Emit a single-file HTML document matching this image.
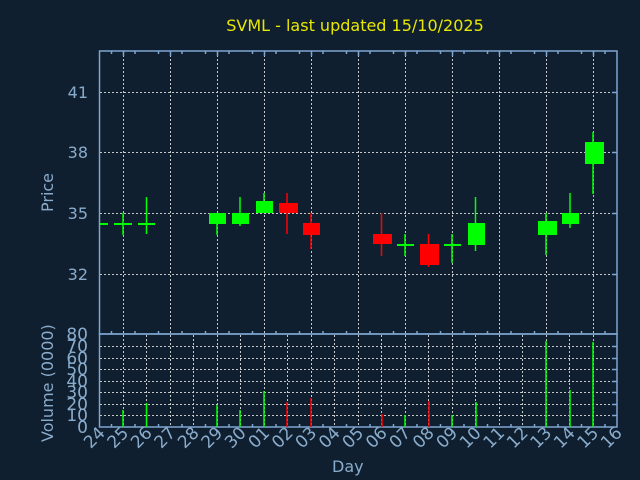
<!DOCTYPE html>
<html><head><meta charset="utf-8"><style>
html,body{margin:0;padding:0;background:#0f1f2f;width:640px;height:480px;overflow:hidden}
svg{display:block}
text{font-family:"DejaVu Sans","Liberation Sans",sans-serif}
</style></head><body>
<svg width="640" height="480" viewBox="0 0 640 480" xmlns="http://www.w3.org/2000/svg">
<rect width="640" height="480" fill="#0f1f2f"/>
<text x="355" y="31" fill="#e8e800" font-size="16" text-anchor="middle">SVML - last updated 15/10/2025</text>
<g stroke="#c8c8c8" stroke-width="1" stroke-dasharray="2,2" fill="none">
<path d="M100 92.5H617M100 152.5H617M100 213.5H617M100 274.5H617"/>
<path d="M123.5 51V334M170.5 51V334M217.5 51V334M264.5 51V334M311.5 51V334M358.5 51V334M405.5 51V334M452.5 51V334M499.5 51V334M546.5 51V334M593.5 51V334"/>
<path d="M100 346.5H617M100 358.5H617M100 369.5H617M100 381.5H617M100 392.5H617M100 404.5H617M100 415.5H617"/>
<path d="M123.5 335V427M146.5 335V427M170.5 335V427M193.5 335V427M217.5 335V427M240.5 335V427M264.5 335V427M287.5 335V427M311.5 335V427M334.5 335V427M358.5 335V427M381.5 335V427M405.5 335V427M428.5 335V427M452.5 335V427M475.5 335V427M499.5 335V427M522.5 335V427M546.5 335V427M569.5 335V427M593.5 335V427"/>
</g>
<g stroke="#7fa6d0" stroke-width="1.5" fill="none">
<rect x="99.5" y="51" width="517.5" height="283"/>
<rect x="99.5" y="334" width="517.5" height="93"/>
<path d="M111.5 51v3M135 51v3M158.5 51v3M182 51v3M205.5 51v3M229 51v3M252.5 51v3M276 51v3M299.5 51v3M323 51v3M346.5 51v3M370 51v3M393.5 51v3M417 51v3M440.5 51v3M464 51v3M487.5 51v3M511 51v3M534.5 51v3M558 51v3M581.5 51v3M605 51v3"/>
<path d="M123.5 51v5M170.5 51v5M217.5 51v5M264.5 51v5M311.5 51v5M358.5 51v5M405.5 51v5M452.5 51v5M499.5 51v5M546.5 51v5M593.5 51v5"/>
<path d="M111.5 334v-3M135 334v-3M158.5 334v-3M182 334v-3M205.5 334v-3M229 334v-3M252.5 334v-3M276 334v-3M299.5 334v-3M323 334v-3M346.5 334v-3M370 334v-3M393.5 334v-3M417 334v-3M440.5 334v-3M464 334v-3M487.5 334v-3M511 334v-3M534.5 334v-3M558 334v-3M581.5 334v-3M605 334v-3"/>
<path d="M111.5 427v-3M135 427v-3M158.5 427v-3M182 427v-3M205.5 427v-3M229 427v-3M252.5 427v-3M276 427v-3M299.5 427v-3M323 427v-3M346.5 427v-3M370 427v-3M393.5 427v-3M417 427v-3M440.5 427v-3M464 427v-3M487.5 427v-3M511 427v-3M534.5 427v-3M558 427v-3M581.5 427v-3M605 427v-3"/>
<path d="M617 92.5h-5M617 152.5h-5M617 213.5h-5M617 274.5h-5M617 346.5h-5M617 358.5h-5M617 369.5h-5M617 381.5h-5M617 392.5h-5M617 404.5h-5M617 415.5h-5"/>
</g>
<g stroke-width="1.5">
<path stroke="#00ff00" d="M123 213V235M146.5 197V234M217 213V235M240 197V226M264 193V213M405 234V256M452 234V263M475.5 197V251M546 213V255M570 193V228M593 132V194"/>
<path stroke="#ff0000" d="M287 193V234M311 213V249M381.5 213V256M428.5 234V267"/>
</g>
<g fill="#00ff00">
<rect x="100" y="223" width="8" height="2"/>
<rect x="114" y="223" width="18" height="2"/>
<rect x="138" y="223" width="17" height="2"/>
<rect x="209" y="213" width="17" height="11"/>
<rect x="232" y="213" width="17" height="11"/>
<rect x="256" y="201" width="17" height="12"/>
<rect x="397" y="244" width="17" height="2"/>
<rect x="444" y="244" width="17" height="2"/>
<rect x="468" y="223" width="17" height="22"/>
<rect x="538" y="221" width="19" height="14"/>
<rect x="562" y="213" width="17" height="11"/>
<rect x="585" y="142" width="19" height="22"/>
</g>
<g fill="#ff0000">
<rect x="279" y="203" width="19" height="10"/>
<rect x="303" y="223" width="17" height="12"/>
<rect x="373" y="234" width="19" height="10"/>
<rect x="420" y="244" width="19" height="21"/>
</g>
<g stroke-width="1.5">
<path stroke="#00ff00" d="M123 427V410M146.5 427V403M217 427V405M240 427V410M264 427V391M405 427V415M452 427V415M476 427V402M546 427V341M570 427V390M593 427V342"/>
<path stroke="#ff0000" d="M287 427V402M311 427V398M382 427V414M429 427V401"/>
</g>
<g fill="#8aaccc" font-size="16" text-anchor="end">
<text x="88" y="98">41</text><text x="88" y="158">38</text><text x="88" y="219">35</text><text x="88" y="280">32</text>
</g>
<g fill="#8aaccc" font-size="17" text-anchor="end">
<text x="88" y="340">80</text><text x="88" y="352">70</text><text x="88" y="364">60</text><text x="88" y="375">50</text><text x="88" y="387">40</text><text x="88" y="398">30</text><text x="88" y="410">20</text><text x="88" y="421">10</text><text x="88" y="433">0</text>
</g>
<g fill="#8aaccc" font-size="16">
<text transform="translate(53,212) rotate(-90)">Price</text>
<text transform="translate(53,442) rotate(-90)">Volume (0000)</text>
<text x="332" y="472">Day</text>
</g>
<g fill="#8aaccc" font-size="17" text-anchor="end">
<text transform="translate(106,434) rotate(-45)">24</text>
<text transform="translate(129.5,434) rotate(-45)">25</text>
<text transform="translate(153,434) rotate(-45)">26</text>
<text transform="translate(176.5,434) rotate(-45)">27</text>
<text transform="translate(200,434) rotate(-45)">28</text>
<text transform="translate(223.5,434) rotate(-45)">29</text>
<text transform="translate(247,434) rotate(-45)">30</text>
<text transform="translate(270.5,434) rotate(-45)">01</text>
<text transform="translate(294,434) rotate(-45)">02</text>
<text transform="translate(317.5,434) rotate(-45)">03</text>
<text transform="translate(341,434) rotate(-45)">04</text>
<text transform="translate(364.5,434) rotate(-45)">05</text>
<text transform="translate(388,434) rotate(-45)">06</text>
<text transform="translate(411.5,434) rotate(-45)">07</text>
<text transform="translate(435,434) rotate(-45)">08</text>
<text transform="translate(458.5,434) rotate(-45)">09</text>
<text transform="translate(482,434) rotate(-45)">10</text>
<text transform="translate(505.5,434) rotate(-45)">11</text>
<text transform="translate(529,434) rotate(-45)">12</text>
<text transform="translate(552.5,434) rotate(-45)">13</text>
<text transform="translate(576,434) rotate(-45)">14</text>
<text transform="translate(599.5,434) rotate(-45)">15</text>
<text transform="translate(623,434) rotate(-45)">16</text>
</g>
</svg>
</body></html>
